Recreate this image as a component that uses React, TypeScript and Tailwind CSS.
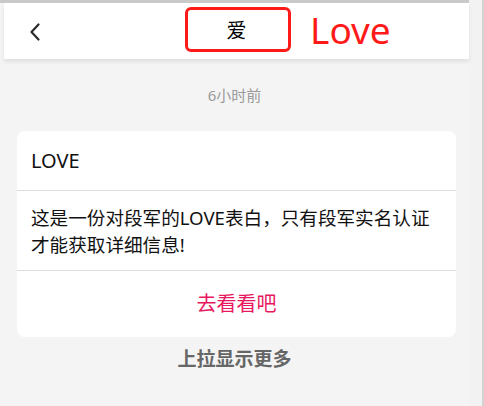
import React from "react";

export default function App() {
  return (
    <div
      className="w-[484px] h-[406px] bg-[#f4f4f4] flex overflow-hidden"
      style={{ fontFamily: '"Noto Sans", "Noto Sans CJK SC", sans-serif' }}
    >
      <div className="w-[469px] flex flex-col">
        <div className="h-[3px] bg-[#c9c9c9]" />
        <div className="ml-[4px] h-[56px] bg-white relative flex items-center shadow-[0_3px_4px_rgba(0,0,0,0.08)]">
          <svg className="absolute left-[24px] top-[19px]" width="14" height="20" viewBox="0 0 14 20">
            <path d="M10.5 2.5 L3.5 10 L10.5 17.5" fill="none" stroke="#2a2a2a" strokeWidth="2.2" strokeLinecap="round" strokeLinejoin="round" />
          </svg>
          <div className="flex-1 text-center text-[20px] leading-none text-black">爱</div>
          <div className="absolute left-[181px] top-[4px] w-[106px] h-[45px] border-[3px] border-[#ff1a1a] rounded-[6px]" />
          <div className="absolute left-[306px] top-[3px] text-[37px] leading-[48px] text-[#ff1a1a]">Love</div>
        </div>
        <div className="h-[72px] flex items-center justify-center text-[15px] text-[#9a9a9a]">6小时前</div>
        <div className="ml-[17px] w-[439px] bg-white rounded-[8px] flex flex-col">
          <div className="h-[59px] flex items-center px-[14px] text-[20px] text-[#111]">LOVE</div>
          <div className="h-px bg-[#dedede]" />
          <div className="h-[79px] flex items-center pl-[14px] pr-[10px] text-[18.6px] leading-[27px] text-[#111]">
            这是一份对段军的LOVE表白，只有段军实名认证才能获取详细信息!
          </div>
          <div className="h-px bg-[#dedede]" />
          <div className="h-[66px] flex items-center justify-center text-[20px] text-[#e8185e]">去看看吧</div>
        </div>
        <div className="h-[44px] flex items-center justify-center text-[19px] font-bold text-[#666]">上拉显示更多</div>
      </div>
      <div className="w-[13px] bg-[#f2f2f2]" />
      <div className="w-[2px] bg-[#d2d2d2]" />
    </div>
  );
}
